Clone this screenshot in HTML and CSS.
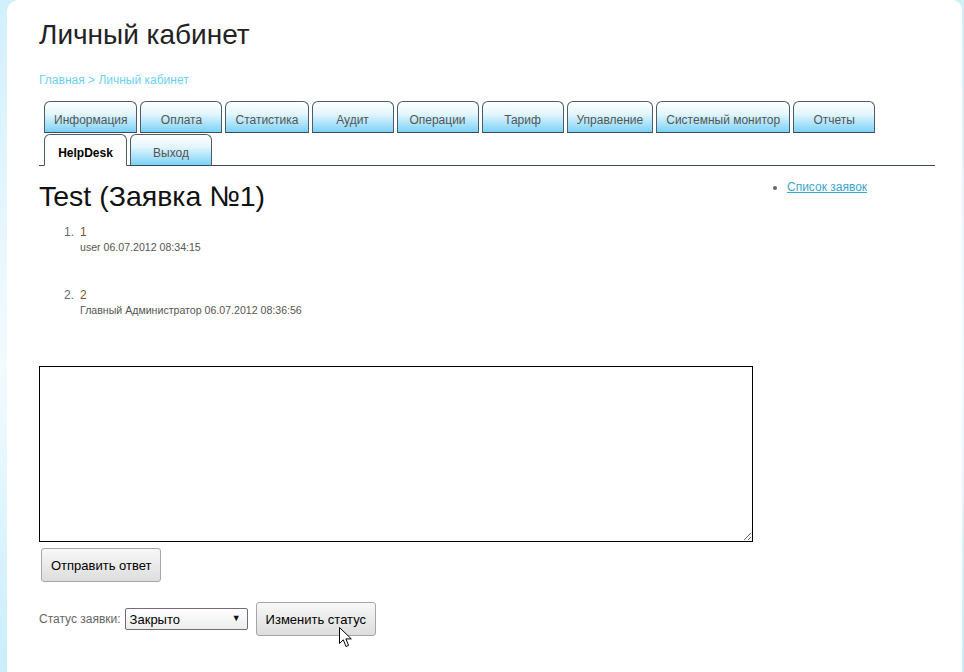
FILE: index.html
```html
<!DOCTYPE html>
<html lang="ru">
<head>
<meta charset="utf-8">
<title>Личный кабинет</title>
<link rel="stylesheet" href="styles.css">
</head>
<body>
<div class="page">
  <h1 class="page-title">Личный кабинет</h1>
  <div class="breadcrumbs"><a href="#">Главная</a> &gt; <a href="#">Личный кабинет</a></div>

  <ul class="tabs">
    <li class="tab"><a href="#">Информация</a></li>
    <li class="tab"><a href="#">Оплата</a></li>
    <li class="tab"><a href="#">Статистика</a></li>
    <li class="tab"><a href="#">Аудит</a></li>
    <li class="tab"><a href="#">Операции</a></li>
    <li class="tab"><a href="#">Тариф</a></li>
    <li class="tab"><a href="#">Управление</a></li>
    <li class="tab"><a href="#">Системный монитор</a></li>
    <li class="tab"><a href="#">Отчеты</a></li>
    <li class="tab tab-active"><a href="#">HelpDesk</a></li>
    <li class="tab"><a href="#">Выход</a></li>
  </ul>

  <div class="content">
    <div class="main">
      <h2 class="ticket-title">Test (Заявка №1)</h2>
      <ol class="messages">
        <li class="message">
          <div class="message-text">1</div>
          <div class="message-meta">user 06.07.2012 08:34:15</div>
        </li>
        <li class="message">
          <div class="message-text">2</div>
          <div class="message-meta">Главный Администратор 06.07.2012 08:36:56</div>
        </li>
      </ol>

      <form class="reply-form">
        <textarea class="reply-text"></textarea>
        <button type="button" class="btn btn-send">Отправить ответ</button>
      </form>

      <form class="status-form">
        <label class="status-label">Статус заявки:</label>
        <span class="select-wrap">
          <select class="status-select">
            <option>Закрыто</option>
            <option>Открыто</option>
          </select>
        </span>
        <button type="button" class="btn btn-status">Изменить статус
          <svg class="cursor" width="14" height="21" viewBox="0 0 14 21">
            <path d="M0.5 0.5 L0.5 16.5 L4.3 12.8 L7 19.5 L9.6 18.4 L6.9 11.9 L12.3 11.9 Z" fill="#fff" stroke="#000" stroke-width="1" stroke-linejoin="round"/>
          </svg>
        </button>
      </form>
    </div>

    <ul class="sidebar">
      <li><a href="#">Список заявок</a></li>
    </ul>
  </div>
</div>
</body>
</html>
```

FILE: styles.css
```css
html, body {
  margin: 0;
  padding: 0;
}

body {
  min-height: 672px;
  background: linear-gradient(to bottom, #d2effd 0%, #eef9fe 45%, #f3fbff 55%, #c9edfc 100%);
  font-family: "Liberation Sans", Arial, sans-serif;
  color: #222;
}

.page {
  margin: 0 2px 0 7px;
  min-height: 672px;
  background: #fff;
  border-top-left-radius: 12px;
  border-top-right-radius: 10px;
  padding: 19px 27px 0 32px;
  box-sizing: border-box;
}

.page-title {
  margin: 0;
  font-size: 28px;
  line-height: 32px;
  font-weight: normal;
  color: #222;
}

.breadcrumbs {
  margin-top: 22px;
  font-size: 12px;
  line-height: 14px;
  color: #6cd0f5;
}

.breadcrumbs a {
  color: #6cd0f5;
  text-decoration: none;
}

/* tab bar */
.tabs {
  list-style: none;
  margin: 14px 0 0;
  padding: 0 0 0 5px;
  display: flex;
  flex-wrap: wrap;
  column-gap: 3px;
  row-gap: 2px;
  border-bottom: 1px solid #3b4c58;
}

.tab {
  margin-bottom: -1px;
}

.tab a {
  display: block;
  box-sizing: border-box;
  min-width: 82px;
  height: 32px;
  padding: 11px 9px 0;
  font-size: 12px;
  line-height: 14px;
  color: #555;
  text-align: center;
  text-decoration: none;
  border: 1px solid #4e5c66;
  border-bottom-color: #3b4c58;
  border-radius: 6px 6px 0 0;
  background: linear-gradient(to bottom, #ffffff 0%, #e4f6fe 40%, #7bd2f8 100%);
}

.tab-active a {
  min-width: 83px;
  color: #000;
  font-weight: bold;
  background: #fff;
  border-bottom-color: #fff;
}

/* page body */
.content {
  display: grid;
  grid-template-columns: 714px 1fr;
}

.ticket-title {
  margin: 14px 0 0;
  font-size: 28.5px;
  line-height: 32px;
  font-weight: normal;
  color: #111;
}

.messages {
  margin: 13px 0 0;
  padding-left: 41px;
  font-size: 12px;
  color: #5a6b80;
}

.message::marker {
  content: counter(list-item) ".\2002";
}

.message {
  margin-bottom: 34px;
}

.message-text {
  line-height: 14px;
  color: #7a5533;
}

.message-meta {
  margin-top: 2px;
  font-size: 10.6px;
  line-height: 13px;
  color: #555;
}

.reply-form {
  margin: 49px 0 0;
}

.reply-text {
  display: block;
  box-sizing: border-box;
  width: 714px;
  height: 176px;
  margin: 0;
  border: 1px solid #000;
  padding: 2px;
  font-family: "Liberation Sans", Arial, sans-serif;
  font-size: 13px;
}

.btn {
  box-sizing: border-box;
  height: 34px;
  padding: 0 9px;
  white-space: nowrap;
  font-family: "Liberation Sans", Arial, sans-serif;
  font-size: 13px;
  color: #000;
  background: linear-gradient(to bottom, #f8f8f8, #dddddd);
  border: 1px solid #a6a6a6;
  border-radius: 3px;
}

.btn-send {
  margin: 6px 0 0 2px;
  min-width: 119px;
}

.status-form {
  margin-top: 20px;
  display: flex;
  align-items: center;
}

.status-label {
  font-size: 12px;
  color: #666;
}

.select-wrap {
  position: relative;
  margin-left: 4px;
}

.select-wrap::after {
  content: "▼";
  position: absolute;
  right: 7px;
  top: 5px;
  font-size: 9px;
  color: #111;
  pointer-events: none;
}

.status-select {
  appearance: none;
  -webkit-appearance: none;
  display: block;
  box-sizing: border-box;
  width: 123px;
  height: 22px;
  margin: 0;
  padding: 0 0 0 4px;
  font-family: "Liberation Sans", Arial, sans-serif;
  font-size: 13px;
  color: #000;
  background: linear-gradient(to bottom, #ffffff, #ececec);
  border: 1px solid #76687f;
  border-radius: 2px;
}

.btn-status {
  position: relative;
  margin-left: 8px;
  min-width: 120px;
}

.cursor {
  position: absolute;
  left: 82px;
  top: 24px;
}

.sidebar {
  margin: 14px 0 0;
  padding-left: 34px;
  font-size: 12px;
  line-height: 14px;
  color: #666;
}

.sidebar a {
  color: #3aa6d2;
  text-decoration: underline;
}
```
